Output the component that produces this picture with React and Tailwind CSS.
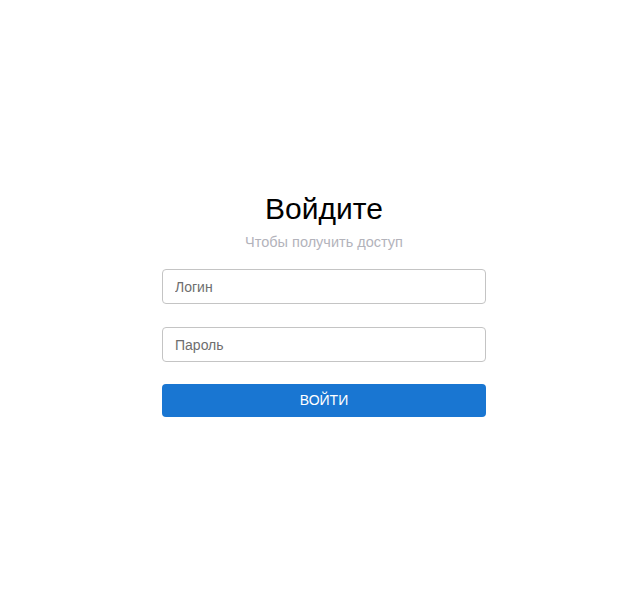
export default function App() {
  return (
    <div
      className="h-screen w-full bg-white flex items-center justify-center pl-[5px] pb-[2px]"
      style={{ fontFamily: '"Liberation Sans", Arial, sans-serif' }}
    >
      <div className="w-[324px] flex flex-col items-center">
        <h1 className="text-[30px] leading-[32px] text-black">Войдите</h1>
        <p className="mt-[7px] text-[14.5px] leading-[20px] text-[#b3b3bb]">Чтобы получить доступ</p>

        <form className="mt-[17px] w-full flex flex-col" onSubmit={(e) => e.preventDefault()}>
          <input
            type="text"
            placeholder="Логин"
            className="h-[35px] w-full rounded-[4px] border border-[#c4c4c4] px-[12px] text-[14px] text-[#333] placeholder:text-[#6e6e6e] outline-none"
          />
          <input
            type="password"
            placeholder="Пароль"
            className="mt-[23px] h-[35px] w-full rounded-[4px] border border-[#c4c4c4] px-[12px] text-[14px] text-[#333] placeholder:text-[#6e6e6e] outline-none"
          />
          <button
            type="submit"
            className="mt-[22px] h-[33px] w-full rounded-[4px] bg-[#1976d2] text-white text-[14px] uppercase"
          >
            Войти
          </button>
        </form>
      </div>
    </div>
  );
}
